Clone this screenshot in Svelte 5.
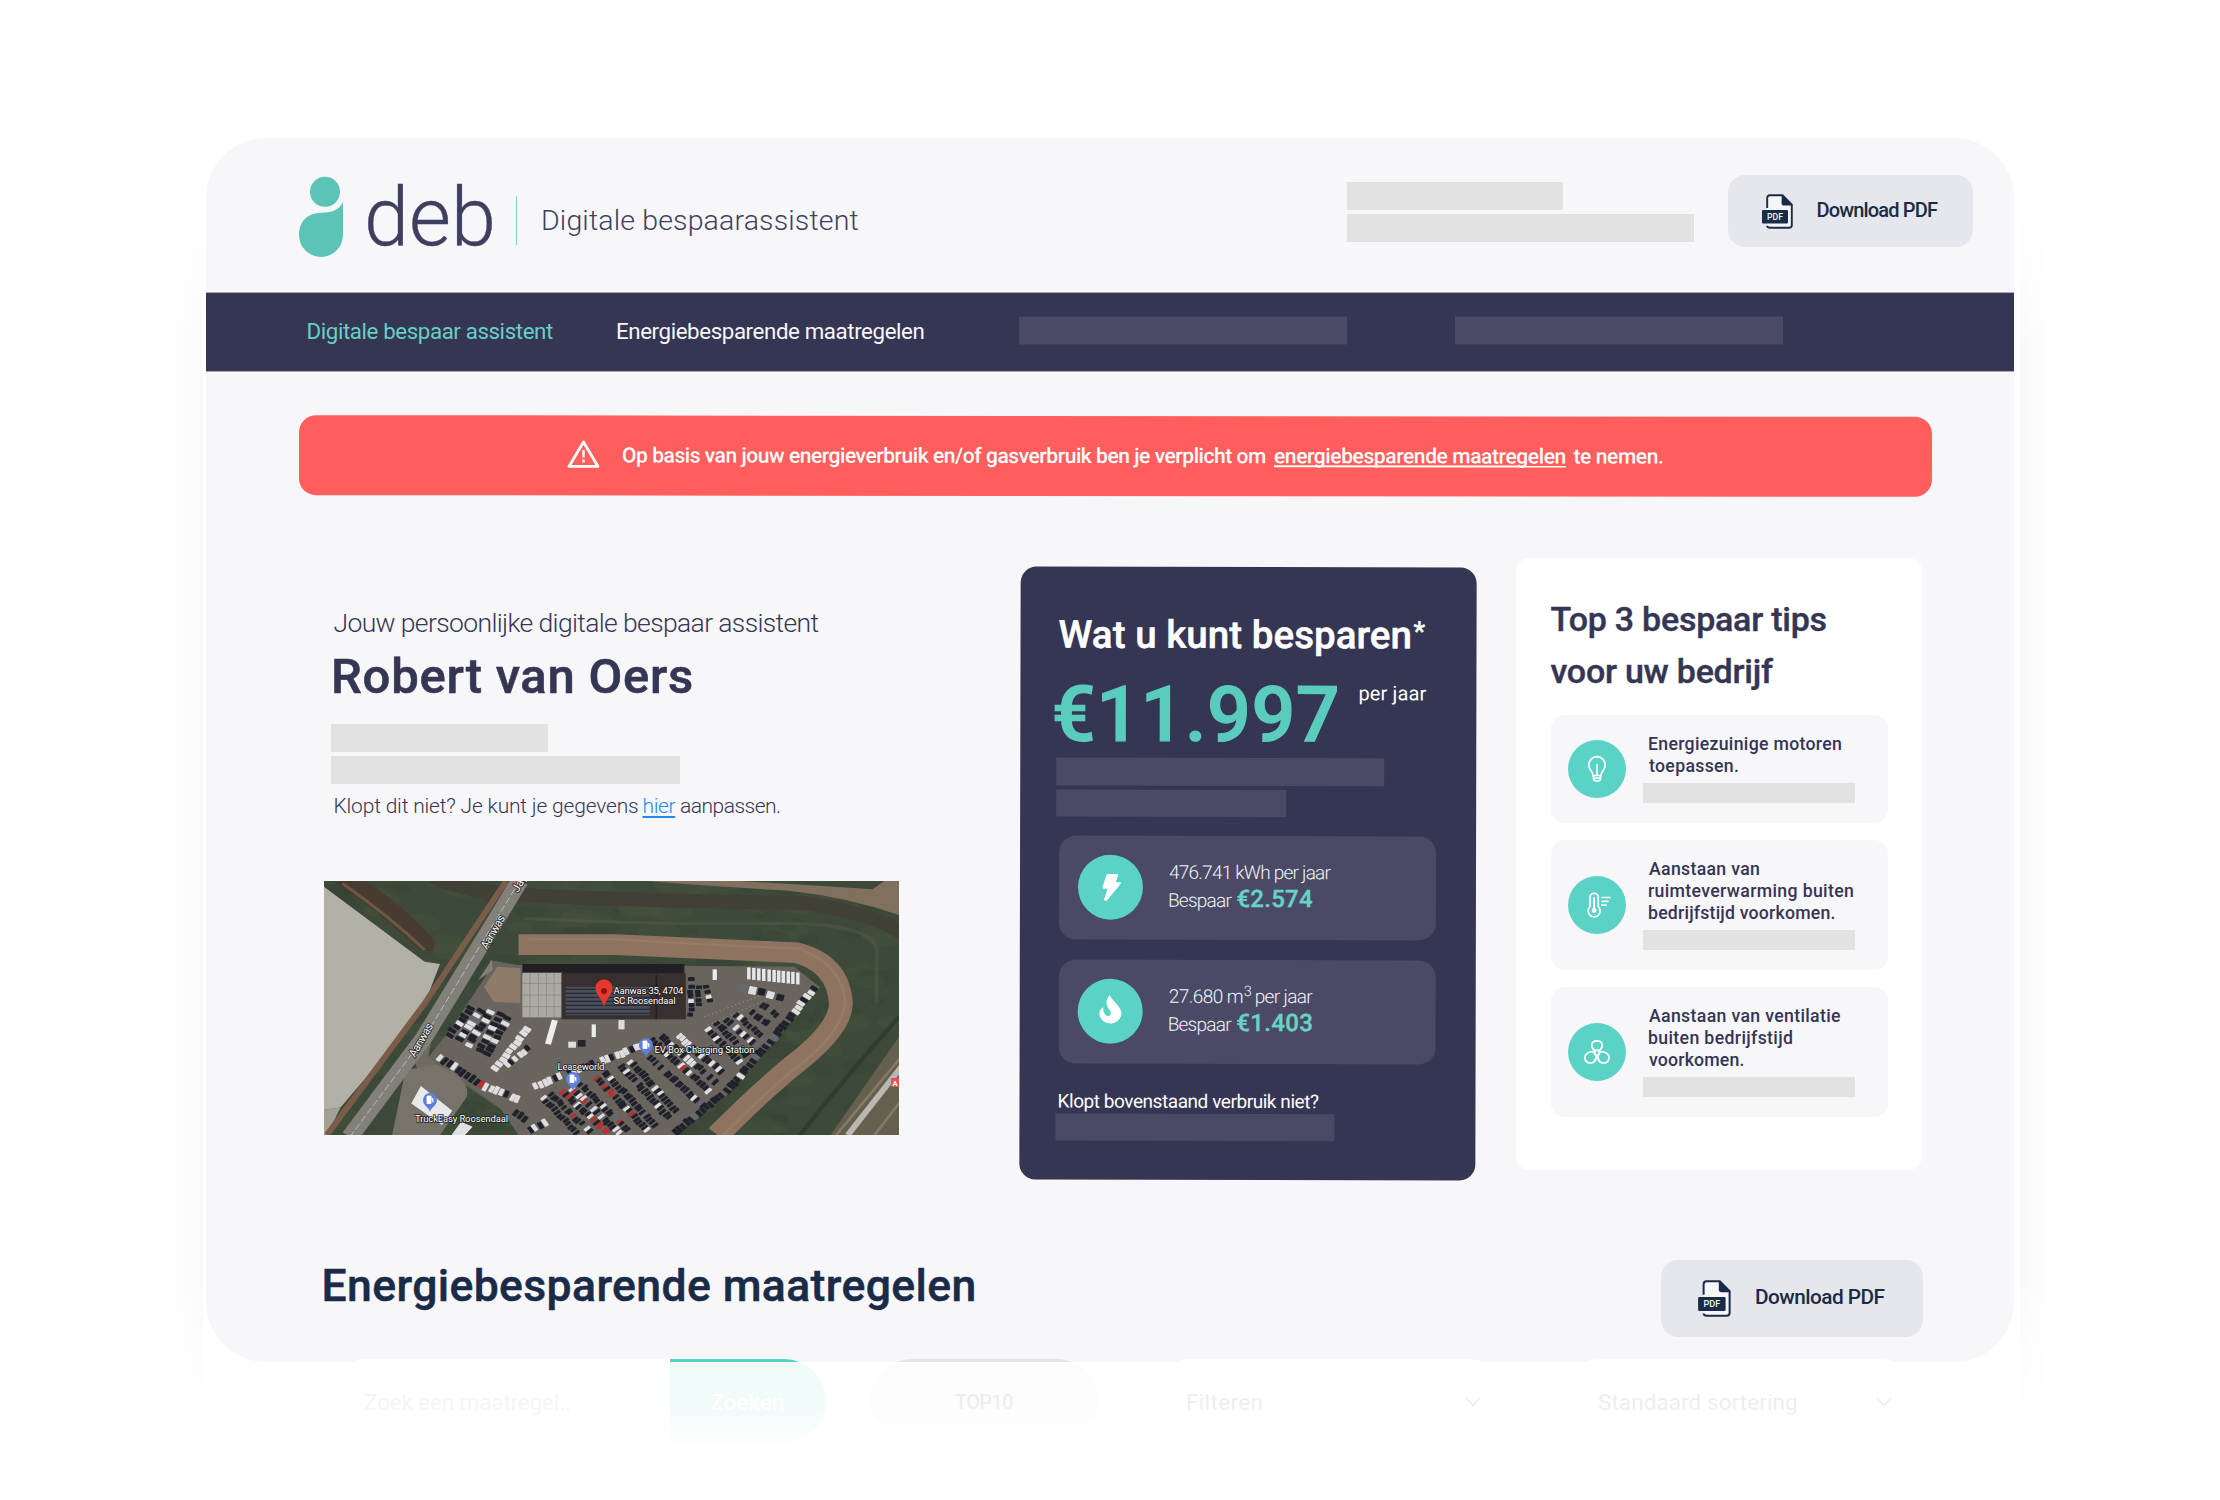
<script>
  // Sets tracking so the ink of a label spans `width` px and starts at the box edge.
  function fit(node, width) {
    const ctx = document.createElement('canvas').getContext('2d');
    const cs = getComputedStyle(node);
    ctx.font = `${cs.fontWeight} ${cs.fontSize} ${cs.fontFamily}`;
    const text = node.textContent.trim();
    const m = ctx.measureText(text);
    const ink = m.actualBoundingBoxLeft + m.actualBoundingBoxRight;
    const bearing = -m.actualBoundingBoxLeft;
    node.style.letterSpacing = `${(width - ink) / Math.max(1, text.length - 1)}px`;
    node.style.marginLeft = `${-bearing}px`;
    node.style.width = `${width + bearing}px`;
  }

  const tips = [
    { icon: 'bulb', size: 'short', lines: [['Energiezuinige motoren', 192], ['toepassen.', 89]] },
    { icon: 'thermo', size: 'tall', lines: [['Aanstaan van', 110], ['ruimteverwarming buiten', 204], ['bedrijfstijd voorkomen.', 185.5]] },
    { icon: 'fan', size: 'tall', lines: [['Aanstaan van ventilatie', 191], ['buiten bedrijfstijd', 143], ['voorkomen.', 94.5]] }
  ];

  let seed = 7;
  const rnd = () => (seed = (seed * 16807) % 2147483647) / 2147483647;

  // Parked-car rows: x1, y1, x2, y2, car length, car width, share of white cars, share of red cars
  const rows = [
    [605, 680, 700, 792, 20, 9, 0.1, 0], [625, 668, 735, 790, 20, 9, 0.12, 0.1],
    [655, 660, 780, 790, 22, 9, 0.15, 0.25], [680, 652, 810, 790, 22, 9, 0.4, 0.12],
    [705, 642, 840, 790, 20, 9, 0.25, 0.05], [745, 620, 885, 785, 22, 9, 0.1, 0.08],
    [768, 605, 905, 770, 22, 9, 0.12, 0], [808, 585, 940, 745, 22, 9, 0.15, 0],
    [835, 572, 960, 725, 22, 9, 0.1, 0], [885, 560, 1030, 712, 22, 9, 0.1, 0],
    [890, 505, 1045, 665, 22, 10, 0.35, 0.08], [915, 495, 1065, 640, 22, 10, 0.4, 0],
    [960, 495, 1080, 610, 22, 10, 0.3, 0], [1035, 475, 1125, 580, 22, 10, 0.2, 0],
    [1060, 455, 1145, 560, 22, 10, 0.35, 0], [1085, 445, 1170, 530, 22, 10, 0.25, 0],
    [1110, 430, 1190, 510, 20, 10, 0.1, 0], [1150, 425, 1200, 465, 20, 10, 0, 0],
    [1175, 400, 1225, 440, 20, 10, 0, 0], [1320, 352, 1200, 520, 24, 12, 0.25, 0.05],
    [1195, 525, 1085, 665, 24, 12, 0.15, 0.05], [1080, 670, 950, 790, 24, 12, 0.08, 0],
    [425, 408, 362, 500, 24, 12, 0.12, 0], [450, 415, 385, 515, 24, 12, 0.55, 0],
    [475, 420, 410, 530, 24, 12, 0.5, 0], [500, 428, 440, 545, 24, 12, 0.2, 0],
    [520, 440, 460, 560, 24, 12, 0.25, 0], [572, 472, 480, 600, 22, 14, 0.85, 0],
    [575, 530, 510, 590, 22, 12, 0.7, 0], [335, 560, 440, 640, 26, 12, 0.25, 0],
    [440, 640, 550, 690, 26, 12, 0.6, 0.1], [585, 650, 870, 525, 24, 12, 0.6, 0],
    [995, 318, 995, 440, 18, 12, 0.4, 0], [1015, 345, 1015, 410, 18, 11, 0, 0],
    [1035, 345, 1045, 400, 18, 11, 0.1, 0], [570, 785, 620, 755, 24, 12, 0.4, 0],
    [1120, 350, 1240, 385, 24, 20, 0.5, 0], [530, 725, 570, 750, 24, 12, 0, 0]
  ];
  const cars = rows.flatMap(([x1, y1, x2, y2, len, wide, white, red]) => {
    const dx = x2 - x1, dy = y2 - y1;
    const n = Math.floor(Math.hypot(dx, dy) / (wide + 1.5));
    const angle = (Math.atan2(dy, dx) * 180) / Math.PI;
    return Array.from({ length: n }, (_, i) => {
      const r = rnd();
      const fill = r < red ? '#b13433' : r < red + white ? '#dedee1' : r < 0.93 ? '#20222b' : '#66686f';
      return {
        x: x1 + (dx * (i + 0.5)) / n + (rnd() - 0.5) * 5, y: y1 + (dy * (i + 0.5)) / n + (rnd() - 0.5) * 5,
        angle: angle + (rnd() - 0.5) * 8, len: len * (0.8 + rnd() * 0.2), wide, fill
      };
    });
  });
  const trucks = [1142, 1155, 1168, 1181, 1195, 1208, 1220, 1232, 1245, 1257, 1270];
  const tufts = Array.from({ length: 240 }, () => ({
    x: 37 + rnd() * 1501, y: 33 + rnd() * 761, r: 8 + rnd() * 26, dark: rnd() > 0.5
  }));
</script>

{#snippet pdfIcon()}
  <svg class="pdf" viewBox="0 0 31 35">
    <path d="M5.2 14V4Q5.2 1.2 8 1.2H20.5L29.8 10.6V31Q29.8 33.8 27 33.8H8Q5.2 33.8 5.2 31.8" fill="#f6f6f9" stroke="#1a2b48" stroke-width="1.9" />
    <path d="M19.6 .8V9Q19.6 11.6 22.2 11.6H30.4Z" fill="#1a2b48" />
    <rect x="0" y="16" width="26" height="13.4" rx="1" fill="#1a2b48" />
    <text x="13" y="25.9" text-anchor="middle" font-size="8.6" font-weight="500" fill="#f1f1f5">PDF</text>
  </svg>
{/snippet}

{#snippet pin(x, y)}
  <g transform="translate({x} {y})">
    <path d="M0 0C-1-5-7-6-7-12A7 7 0 0 1 7-12C7-6 1-5 0 0Z" fill="#5f7fdc" />
    <path d="M-3-16H1V-8.500H-3ZM1-13.500H3V-9.500" fill="#fff" stroke="#fff" stroke-width=".8" />
  </g>
{/snippet}

<div class="page">
  <div class="card">
    <header>
      <svg class="logo" viewBox="0 0 44 80">
        <circle cx="26" cy="14.800" r="15" fill="#5bc4b7" />
        <path d="M44 24.700V58A22 22 0 0 1 0 58C0 44 9 36 22 35.800C34 35.600 41 32 44 24.700Z" fill="#5bc4b7" />
      </svg>
      <span class="t deb" use:fit={124}>deb</span>
      <i class="rule"></i>
      <span class="t tagline" use:fit={315.5}>Digitale bespaarassistent</span>
      <div class="ghosts">
        <i class="ghost w216"></i>
        <i class="ghost w347"></i>
      </div>
      <button class="dl">
        {@render pdfIcon()}
        <span class="t" use:fit={120.5}>Download PDF</span>
      </button>
    </header>

    <nav>
      <a class="t active" href="#top" use:fit={245.5}>Digitale bespaar assistent</a>
      <a class="t second" href="#top" use:fit={306.5}>Energiebesparende maatregelen</a>
      <i class="dim n1"></i>
      <i class="dim n2"></i>
    </nav>

    <div class="alert">
      <svg viewBox="0 0 33 29">
        <path d="M16.500 2.500L31 27H2Z" fill="none" stroke="#fff" stroke-width="2.800" stroke-linejoin="round" />
        <path d="M16.500 10.500V18M16.500 20V23" stroke="#fff" stroke-width="2.400" />
      </svg>
      <span class="t" use:fit={643}>Op basis van jouw energieverbruik en/of gasverbruik ben je verplicht om</span>
      <a class="t" href="#maatregelen" use:fit={291.5}>energiebesparende maatregelen</a>
      <span class="t" use:fit={89.5}>te nemen.</span>
    </div>

    <div class="columns">
      <section class="person">
        <p class="t intro" use:fit={485}>Jouw persoonlijke digitale bespaar assistent</p>
        <h1 class="t" use:fit={358}>Robert van Oers</h1>
        <div class="ghosts">
          <i class="ghost w216"></i>
          <i class="ghost w348"></i>
        </div>
        <p class="check">
          <span class="t" use:fit={303.5}>Klopt dit niet? Je kunt je gegevens</span>
          <a class="t" href="#gegevens" use:fit={32}>hier</a>
          <span class="t" use:fit={99}>aanpassen.</span>
        </p>
        <svg class="map" viewBox="0 0 575 254">
          <g transform="scale(.3829 .3334) translate(-37 -33)">
            <rect x="37" y="33" width="1502" height="762" fill="#3e4a39" />
            {#each tufts as s}
              <ellipse cx={s.x} cy={s.y} rx={s.r * 2} ry={s.r} fill={s.dark ? '#323e30' : '#4a5743'} opacity=".25" />
            {/each}
            <path d="M880 33H1539V135Q1400 80 1250 62Q1060 50 880 33Z" fill="#80705d" />
            <path d="M1120 33H1500L1470 58Q1300 45 1120 33Z" fill="#3c4a37" />
            <path d="M320 20Q400 62 520 72T900 90T1280 98Q1440 120 1545 185" fill="none" stroke="#423f37" stroke-width="42" />
            <path d="M560 145Q900 165 1200 160T1480 260V400" fill="none" stroke="#55614a" stroke-width="10" opacity=".4" />
            <path d="M37 50L300 275L340 282L290 430L80 712L37 720Z" fill="#b3b0a6" />
            <path d="M37 720L80 712L45 794H37Z" fill="#a3a096" />
            <path d="M60 33H145Q260 120 328 215L322 245L285 240Q180 120 60 33Z" fill="#483c30" />
            <path d="M85 40Q210 140 300 240" fill="none" stroke="#6d5844" stroke-width="8" />
            <path d="M513 33L300 400L45 794" fill="none" stroke="#7a5d49" stroke-width="16" />
            <path d="M470 270L540 285L1265 290L1332 352L1210 520L1085 680L955 795H545L500 718L310 560L360 490L470 300Z" fill="#69655e" />
            <path d="M320 490L275 580L300 650L400 640L500 720L310 560Z" fill="#6f6b63" />
            <path d="M250 600L330 585Q420 620 410 680L340 795H215Z" fill="#77736a" />
            <path d="M548 33L300 500L105 800" fill="none" stroke="#828078" stroke-width="46" />
            <path d="M548 33L300 500L105 800" fill="none" stroke="#c4c2bb" stroke-width="2.500" stroke-dasharray="20 8" />
            <path d="M440 330L475 270L478 300Z" fill="#828078" />
            <path d="M545 224H800Q1100 240 1270 248Q1380 280 1387 400Q1385 470 1290 560Q1190 650 1065 795" fill="none" stroke="#8e7460" stroke-width="62" />
            <path d="M570 208H800Q1100 228 1280 236Q1395 290 1398 400Q1390 480 1290 575Q1190 665 1080 795" fill="none" stroke="#a38a73" stroke-width="7" opacity=".4" />
            <path d="M1539 500L1360 795H1539Z" fill="#655f50" />
            <path d="M1545 590L1405 795" stroke="#b9b7b0" stroke-width="16" />
            <path d="M1545 560L1375 795M1545 690L1475 795" stroke="#857b65" stroke-width="7" fill="none" />
            <path d="M1539 440Q1400 620 1280 795" stroke="#26342a" stroke-width="12" opacity=".6" fill="none" />
            <path d="M490 290L550 295V400L480 395L455 350Z" fill="#8f7c68" />
            <path d="M555 282H978V315H555Z" fill="#211f24" />
            <rect x="555" y="308" width="104" height="134" fill="#aaa9a3" />
            <path d="M575 308V442M597 308V442M618 308V442M638 308V442M555 340H659M555 375H659M555 410H659" stroke="#85857f" stroke-width="2" />
            <path d="M657 310H982V448H657Z" fill="#382f2f" />
            <path d="M668 350H887V436H668Z" fill="#4b4d59" />
            <path d="M668 358H887M668 370H887M668 382H887M668 394H887M668 406H887M668 418H887M668 430H887" stroke="#262936" stroke-width="4" />
            <path d="M905 315V448" stroke="#211f24" stroke-width="4" />
            <path d="M1030 440L1180 375M1040 465L1190 390" stroke="#94918a" stroke-width="3" stroke-dasharray="3 8" />
            <path d="M290 648L372 722L345 765L265 700Z" fill="#e9e9ea" />
            <path d="M370 795L395 755L425 770L405 795Z" fill="#dfe0e2" />
            <path d="M640 450L622 522" stroke="#eceded" stroke-width="16" />
            <rect x="736" y="463" width="11" height="38" fill="#eceded" />
            <rect x="1052" y="298" width="11" height="32" fill="#eceded" />
            <rect x="675" y="515" width="20" height="18" fill="#e0e0e2" />
            <rect x="700" y="510" width="20" height="20" fill="#25272f" />
            <rect x="806" y="450" width="16" height="28" fill="#dcdce0" />
            {#each trucks as x}
              <rect {x} y={292 + (x - 1142) * 0.12} width="9" height="36" fill="#e6e7ea" />
            {/each}
            {#each cars as c}
              <rect x={-c.wide / 2} y={-c.len / 2} width={c.wide} height={c.len} rx="2" fill={c.fill} transform="translate({c.x} {c.y}) rotate({c.angle})" />
            {/each}
          </g>
          {@render pin(322, 176)}
          {@render pin(249, 210)}
          {@render pin(106, 231)}
          <path d="M280 126C278 117 271.500 114 271.500 107A8.500 8.500 0 0 1 288.500 107C288.500 114 282 117 280 126Z" fill="#e8382d" />
          <circle cx="280" cy="110" r="3" fill="#8d120c" />
          <g class="labels">
            <text x="289.500" y="112.500" textLength="70">Aanwas 35, 4704</text>
            <text x="289.500" y="122.800" textLength="62">SC Roosendaal</text>
            <text x="330.500" y="171.500" textLength="100">EV Box Charging Station</text>
            <text x="233.500" y="188.500" textLength="47">Leaseworld</text>
            <text x="91" y="240.500" textLength="93">TruckEasy Roosendaal</text>
            <text class="street" transform="translate(163 69) rotate(-60)" textLength="37">Aanwas</text>
            <text class="street" transform="translate(91 177) rotate(-60)" textLength="37">Aanwas</text>
            <text class="street" transform="translate(194 12) rotate(-60)">Jag</text>
          </g>
          <rect x="567" y="197" width="8" height="9" fill="#e8514f" />
          <text class="road" x="568.500" y="204.600">A</text>
        </svg>
      </section>

      <section class="saving">
        <h2><span class="t" use:fit={352}>Wat u kunt besparen</span><sup>*</sup></h2>
        <div class="price">
          <span class="t amount" use:fit={282}>€11.997</span>
          <span class="t per" use:fit={67}>per jaar</span>
        </div>
        <i class="dim s1"></i>
        <i class="dim s2"></i>
        <div class="usage">
          <span class="round">
            <svg viewBox="0 0 66 66"><path d="M31 19.500H41L38.500 28H43Q44 28.500 43.400 29.500L29.500 46.500Q27 47.500 26.500 45.500L30 34.500H26Q24.700 34 25 32.500L28.800 21Q29.300 19.500 31 19.500Z" fill="#fff" /></svg>
          </span>
          <div class="lines">
            <p><span class="t" use:fit={162.5}>476.741 kWh per jaar</span></p>
            <p class="gain"><span class="t" use:fit={63.5}>Bespaar</span><b class="t" use:fit={75.5}>€2.574</b></p>
          </div>
        </div>
        <div class="usage">
          <span class="round">
            <svg viewBox="0 0 66 66"><path d="M32.500 16.500C34 22 44.500 27.500 44.500 35.500A11.300 11 0 0 1 22 35.500C21.800 32.500 24 30 26 29C25.500 33 27.500 37.500 30.500 37.800C34 38 34.500 34.500 32.500 32C29.500 28 27 22.500 32.500 16.500Z" fill="#fff" /></svg>
          </span>
          <div class="lines">
            <p class="cubic"><span class="t" use:fit={74}>27.680 m</span><sup>3</sup><span class="t" use:fit={57.5}>per jaar</span></p>
            <p class="gain"><span class="t" use:fit={63.5}>Bespaar</span><b class="t" use:fit={75}>€1.403</b></p>
          </div>
        </div>
        <p class="t question" use:fit={260.5}>Klopt bovenstaand verbruik niet?</p>
        <i class="dim s3"></i>
      </section>

      <section class="tips">
        <h3 class="t" use:fit={276}>Top 3 bespaar tips</h3>
        <h3 class="t" use:fit={223.5}>voor uw bedrijf</h3>
        <ul>
          {#each tips as tip}
            <li class={tip.size}>
              <span class="round">
                <svg viewBox="0 0 58 58" fill="none" stroke="#fff" stroke-width="1.700" stroke-linecap="round" stroke-linejoin="round">
                  {#if tip.icon === 'bulb'}
                    <path d="M25 35.500C25 31.500 20.800 30 20.800 25.200A8.200 8.500 0 0 1 37.200 25.200C37.200 30 33 31.500 33 35.500ZM25.500 35.500V38.500Q25.500 41 29 41T32.500 38.500V35.500M29 24.500V35M26 38H32" />
                  {:else if tip.icon === 'thermo'}
                    <path d="M22 30.500V21.500A4 4 0 0 1 30.300 21.500V30.500A6 6 0 1 1 22 30.500Z" />
                    <path d="M26.100 22V34" stroke-width="2" /><circle cx="26.100" cy="34.500" r="1.600" />
                    <path d="M34 21.500H42M34 25.300H40M34 29.200H38" />
                  {:else}
                    <path d="M26.500 27.500C23 24.500 22 18 29 17.800C36 18 35 24.500 31.500 27.500" />
                    <path d="M27 29.500C22.500 27.500 16.500 30 17 35.500C18 41.500 25.500 41 27.500 37Q28.500 34 29 31.800" />
                    <path d="M31 29.500C35.500 27.500 41.500 30 41 35.500C40 41.500 32.500 41 30.500 37Q29.500 34 29 31.800" />
                    <circle cx="29" cy="29.800" r="2.600" /><path d="M29 33L26.500 38M29 33L31.500 38" />
                  {/if}
                </svg>
              </span>
              <div class="tiptext">
                {#each tip.lines as [line, w]}
                  <span class="t" use:fit={w}>{line}</span>
                {/each}
                <i class="ghost"></i>
              </div>
            </li>
          {/each}
        </ul>
      </section>
    </div>

    <div class="measures">
      <h2 class="t" use:fit={650}>Energiebesparende maatregelen</h2>
      <button class="dl large">
        {@render pdfIcon()}
        <span class="t" use:fit={128.5}>Download PDF</span>
      </button>
    </div>
  </div>

  <div class="filters">
    <div class="search"><span class="t" use:fit={206}>Zoek een maatregel..</span></div>
    <div class="go"><span class="t" use:fit={74}>Zoeken</span></div>
    <div class="top"><span class="t" use:fit={58}>TOP10</span></div>
    <div class="select f1"><span class="t" use:fit={74.5}>Filteren</span><svg viewBox="0 0 16 10"><path d="M1 1L8 8.500L15 1" /></svg></div>
    <div class="select f2"><span class="t" use:fit={199}>Standaard sortering</span><svg viewBox="0 0 16 10"><path d="M1 1L8 8.500L15 1" /></svg></div>
    <div class="veil"></div>
  </div>
</div>

<style>
  :global(body) { margin: 0; background: #fff; }
  .page, .page * { box-sizing: border-box; }
  .page { position: relative; width: 2220px; height: 1500px; overflow: hidden; padding: 138px 206px 0; background: #fff; font-family: Roboto, "Liberation Sans", sans-serif; color: #353554; }
  .page::before, .page::after { content: ""; position: absolute; top: 205px; width: 32px; height: 1215px; -webkit-mask-image: linear-gradient(transparent, #000 12%, #000 88%, transparent); mask-image: linear-gradient(transparent, #000 12%, #000 88%, transparent); }
  .page::before { left: 171px; background: linear-gradient(90deg, rgba(0,0,0,0), rgba(0,0,0,.022)); }
  .page::after { right: 168px; background: linear-gradient(270deg, rgba(0,0,0,0), rgba(0,0,0,.022)); }
  p, h1, h2, h3, ul { margin: 0; padding: 0; font-weight: inherit; }
  i { display: block; flex: none; }
  svg { display: block; flex: none; }
  .t { display: block; flex: none; white-space: nowrap; }

  .card { position: relative; height: 1224px; border-radius: 60px; background: #f7f7fa; }
  header { display: flex; align-items: flex-start; height: 154px; padding-left: 93px; }
  .logo { width: 44px; height: 80px; margin: 39px 25px 0 0; overflow: visible; }
  .deb { margin-top: 40px; font-size: 81px; line-height: 80px; font-weight: 300; color: #3e3e5e; -webkit-text-stroke: .4px #3e3e5e; }
  .rule { width: 1px; height: 49px; margin: 58px 25px 0 24px; background: #7fd0c6; }
  .tagline { margin-top: 66px; font-size: 28.500px; line-height: 34px; font-weight: 300; color: #3e3e5e; transform: translateX(1px); }
  .ghosts { display: flex; flex-direction: column; gap: 4px; }
  header .ghosts { margin: 44px 33.500px 0 489px; width: 347.500px; }
  .ghost { height: 28px; background: #e2e2e2; }
  .w216 { width: 216.500px; }
  .w347 { width: 347.500px; }
  .w348 { width: 348.500px; }

  .dl { display: flex; flex: none; align-items: center; width: 245px; height: 72px; margin-top: 37px; padding: 0 0 0 34px; border: 0; border-radius: 17px; background: #e6e7ed; font-family: inherit; font-size: 20px; font-weight: 500; color: #1a2b48; }
  .dl .pdf { width: 31px; height: 35px; margin-right: 25px; }
  .dl .t { line-height: 24px; transform: translateY(-1px); text-align: left; }
  .dl.large { width: 262.500px; height: 77px; margin-top: 1px; padding-left: 37px; font-size: 20.800px; }
  .dl.large .pdf { width: 33px; height: 37px; margin-right: 25.500px; }

  nav { display: flex; align-items: center; height: 79.500px; padding-left: 101.500px; border-top: 1px solid #a9a9bb; border-bottom: 1px solid #a9a9bb; background: #353554; font-size: 22.300px; }
  nav a { line-height: 28px; color: #f7f7fa; text-decoration: none; transform: translateY(-1.500px); }
  nav .active { color: #65d0c3; }
  nav .active + a { position: relative; }
  nav .second { left: 64px; }
  .dim { height: 27.500px; background: #4a4a66; }
  nav .dim { width: 328px; transform: translateY(-1.500px); }
  nav .n1 { margin-left: 159.500px; }
  nav .n2 { margin-left: 107.500px; }

  .alert { display: flex; align-items: center; gap: 8px; width: 1633px; height: 79.500px; margin: 44.500px 0 0 93px; padding-left: 267.500px; border-radius: 17px; background: #ff5e5c; color: #fff; font-size: 21px; font-weight: 500; transform: rotate(.06deg); }
  .alert svg { width: 33px; height: 29px; margin: -2px 15.500px 0 0; }
  .alert .t { line-height: 26px; color: #fff; padding-top: 1px; }
  .alert a { text-decoration: underline; text-decoration-thickness: 1.500px; text-underline-offset: 2px; text-decoration-skip-ink: none; }

  .columns { display: flex; align-items: flex-start; height: 622px; margin-top: 62.500px; padding-left: 125px; }
  .person { flex: none; width: 689px; padding: 48px 0 0 0; }
  .intro { font-size: 26.500px; line-height: 34px; font-weight: 300; transform: translateX(2.500px); }
  h1.t { margin-top: 8px; font-size: 49px; line-height: 58px; font-weight: 500; transform: translateX(3px); -webkit-text-stroke: .6px #353554; }
  .person .ghosts { margin-top: 18px; }
  .check { display: flex; gap: 5.500px; margin: 8px 0 0 3.500px; font-size: 21px; line-height: 28px; font-weight: 300; }
  .check a { color: #2687fb; text-underline-offset: 3px; }
  .map { width: 575px; height: 254px; margin: 61px 0 0 -7px; overflow: hidden; }
  .labels text { font-size: 9.600px; fill: #fff; stroke: #23231f; stroke-width: 1.600px; paint-order: stroke; }
  .labels .street { font-size: 11.500px; }
  .road { font-size: 7.500px; font-weight: 700; fill: #fff; }

  .saving { flex: none; width: 455.500px; height: 613px; margin-top: 9px; padding: 44.500px 0 0 39px; border-radius: 16px; background: #353554; color: #fff; transform: rotate(.13deg); }
  .saving h2 { display: flex; height: 46px; font-size: 38.500px; line-height: 46px; font-weight: 500; transform: translateX(-1px); -webkit-text-stroke: .5px #fff; }
  .saving h2 sup { margin: -4px 0 0 3px; font-size: 27px; line-height: 46px; font-weight: 400; }
  .price { display: flex; align-items: flex-start; height: 80px; margin: 17px 0 3.500px -4.500px; }
  .amount { font-size: 77px; line-height: 80px; font-weight: 500; color: #5accbe; -webkit-text-stroke: 1.300px #5accbe; }
  .per { position: relative; left: 22.500px; margin-top: 6px; font-size: 20px; line-height: 24px; }
  .saving .dim { margin-left: -3px; }
  .s1 { width: 328px; }
  .s2 { width: 230px; margin-top: 4px; }
  .s3 { width: 279px; }
  .usage { display: flex; align-items: center; width: 377px; height: 104.500px; margin-top: 18.500px; padding-left: 19px; border-radius: 17px; background: #4a4a66; }
  .usage + .usage { margin-top: 19.500px; }
  .round { flex: none; width: 65px; height: 65px; border-radius: 50%; background: #5ad3c6; }
  .round svg { width: 100%; height: 100%; }
  .lines { width: 240px; height: 60px; margin: 2px 0 0 26px; font-size: 19px; line-height: 28px; font-weight: 300; color: #f4f4f8; }
  .lines p { height: 28px; }
  .lines .gain { display: flex; align-items: baseline; gap: 5px; margin-top: -1.500px; }
  .gain b { font-size: 24px; font-weight: 500; color: #68d2c6; -webkit-text-stroke: .4px #68d2c6; }
  .cubic { display: flex; }
  .cubic sup { width: 13px; padding-left: 1px; margin-top: -5px; font-size: 14.500px; }
  .question { margin-top: 25.500px; font-size: 19px; line-height: 24px; }

  .tips { flex: none; width: 406px; height: 612px; margin-left: 40px; padding: 34.500px 0 0 35px; border-radius: 14px; background: #fff; }
  .tips h3 { font-size: 34px; line-height: 52px; font-weight: 500; -webkit-text-stroke: .4px #353554; }
  .tips ul { display: flex; flex-direction: column; gap: 17.500px; width: 337px; margin-top: 18.500px; list-style: none; }
  .tips li { display: flex; align-items: center; height: 129.800px; padding-left: 17.500px; border-radius: 14px; background: #f7f7fa; }
  .tips li.short { height: 107.500px; }
  .tips .round { width: 58px; height: 58px; }
  .tiptext { align-self: flex-start; margin: 17.500px 0 0 23px; font-size: 17.700px; line-height: 22px; font-weight: 500; }
  .tiptext .ghost { width: 211.500px; height: 20.700px; margin: 6px 0 0 -6px; }

  .measures { display: flex; justify-content: space-between; align-items: flex-start; margin-top: 78.500px; padding: 0 91px 0 118.500px; }
  .measures h2 { font-size: 44.500px; line-height: 54px; font-weight: 500; color: #1a2b48; -webkit-text-stroke: .5px #1a2b48; }

  .filters { position: relative; display: flex; width: 1600px; height: 84px; margin: -3.500px 0 0 118px; font-size: 22.500px; line-height: 28px; color: #222; }
  .filters > div:not(.veil) { display: flex; align-items: center; flex: none; height: 84px; padding-top: 2px; }
  .search { width: 346px; padding-left: 40px; border-radius: 42px 0 0 42px; background: #fff; color: #808080; }
  .go { width: 156px; padding-left: 40px; border-radius: 0 42px 42px 0; background: #55d0c3; color: #fff; font-weight: 500; }
  .top { width: 229px; margin-left: 44px; padding-left: 85px; border-radius: 42px; background: #e4e4ec; font-size: 20px; font-weight: 500; }
  .select { justify-content: space-between; width: 362px; border-radius: 42px; background: #fff; }
  .f1 { margin-left: 49px; padding: 0 29px 0 39px; }
  .f2 { margin-left: 49px; padding: 0 29px 0 39px; }
  .select svg { width: 16px; height: 10px; fill: none; stroke: #222; stroke-width: 1.800; }
  .veil { position: absolute; inset: 3.500px -20px -10px; background: linear-gradient(rgba(255,255,255,.91), rgba(255,255,255,.92) 50%, #fff 95%); }
</style>
